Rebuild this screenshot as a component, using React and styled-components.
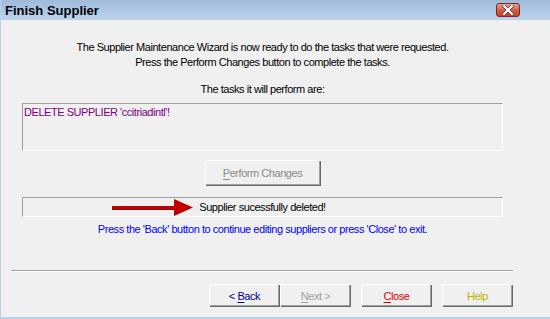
import React from "react";
import styled, { createGlobalStyle } from "styled-components";

const Global = createGlobalStyle`
  html, body {
    margin: 0;
    padding: 0;
    background: #f0f0f0;
  }
  body {
    font-family: "Liberation Sans", Arial, sans-serif;
    font-size: 11px;
    letter-spacing: -0.45px;
  }
`;

const Window = styled.div`
  width: 550px;
  height: 319px;
  box-sizing: border-box;
  background: #f0f0f0;
  border-left: 1px solid #b9d1ea;
  border-bottom: 2px solid #b9d1ea;
  display: flex;
  flex-direction: column;
  overflow: hidden;
`;

const TitleBar = styled.div`
  height: 20px;
  flex: none;
  display: flex;
  align-items: center;
  justify-content: space-between;
  padding: 0 30px 0 4px;
  background: linear-gradient(#9fbbdb, #bcd3ec);
`;

const Title = styled.div`
  font-size: 13px;
  font-weight: bold;
  letter-spacing: 0;
  color: #000;
  padding-top: 1px;
`;

const CloseBox = styled.div`
  width: 22px;
  height: 12px;
  margin-top: 0;
  border: 1px solid #7d2b22;
  border-radius: 3px;
  background: linear-gradient(#e9a596, #d35f4a 50%, #c2412c);
  display: flex;
  align-items: center;
  justify-content: center;
`;

const Body = styled.div`
  width: 481px;
  margin-left: 21px;
  display: flex;
  flex-direction: column;
  align-items: stretch;
  text-align: center;
  color: #000;
`;

const Intro = styled.p`
  margin: 20px 0 0;
  line-height: 15px;
`;

const Label = styled.p`
  margin: 12px 0 6px;
  line-height: 15px;
`;

const Sunken = styled.div`
  position: relative;
  box-sizing: border-box;
  height: ${(p) => p.$h}px;
  border-top: 1px solid #a0a0a0;
  border-left: 1px solid #a0a0a0;
  border-right: 1px solid #ffffff;
  border-bottom: 1px solid #ffffff;
  background: #f0f0f0;
`;

const TaskText = styled.div`
  text-align: left;
  color: #800080;
  line-height: 14px;
  padding: 1px 0 0 1px;
`;

const StatusText = styled.div`
  line-height: 18px;
`;

const Button = styled.button`
  box-sizing: border-box;
  width: ${(p) => p.$w}px;
  height: ${(p) => p.$h}px;
  background: #f0f0f0;
  border: none;
  padding: 0;
  font: inherit;
  letter-spacing: -0.45px;
  color: ${(p) => p.$color};
  box-shadow: inset 1px 1px #ffffff, inset -1px -1px #696969, inset -2px -2px #a0a0a0;
  cursor: pointer;

  u {
    text-decoration-thickness: 1px;
    text-underline-offset: 2px;
  }
`;

const CenterRow = styled.div`
  display: flex;
  justify-content: center;
  margin: 9px 0 11px;
`;

const Hint = styled.p`
  margin: 5px 0 0;
  line-height: 15px;
  color: #0000ff;
`;

const Arrow = styled.svg`
  position: absolute;
  left: 89px;
  top: 1px;
`;

const Footer = styled.div`
  margin: auto 0 10px 10px;
  width: 502px;
`;

const Separator = styled.div`
  border-top: 1px solid #a0a0a0;
  border-bottom: 1px solid #ffffff;
  margin-bottom: 12px;
`;

const ButtonRow = styled.div`
  display: flex;
  justify-content: flex-end;
  gap: 10px;
`;

const Pair = styled.div`
  display: flex;
`;

const XIcon = () => (
  <svg width="12" height="10" viewBox="0 0 12 10">
    <path d="M2 1 L10 9 M10 1 L2 9" stroke="#6b3a33" strokeWidth="3.6" strokeLinecap="square" />
    <path d="M2 1 L10 9 M10 1 L2 9" stroke="#ffffff" strokeWidth="2" strokeLinecap="square" />
  </svg>
);

export default function App() {
  return (
    <>
      <Global />
      <Window>
        <TitleBar>
          <Title>Finish Supplier</Title>
          <CloseBox>
            <XIcon />
          </CloseBox>
        </TitleBar>

        <Body>
          <Intro>
            The Supplier Maintenance Wizard is now ready to do the tasks that were requested.
            <br />
            Press the Perform Changes button to complete the tasks.
          </Intro>
          <Label>The tasks it will perform are:</Label>
          <Sunken $h={48}>
            <TaskText>DELETE SUPPLIER 'ccitriadintl'!</TaskText>
          </Sunken>
          <CenterRow>
            <Button $w={116} $h={26} $color="#8a8a8a">
              <u>P</u>erform Changes
            </Button>
          </CenterRow>
          <Sunken $h={20}>
            <Arrow width="82" height="18" viewBox="0 0 82 18">
              <rect x="0" y="7" width="64" height="3" fill="#c00000" />
              <rect x="0" y="10" width="64" height="1" fill="#8a1010" />
              <polygon points="62,0 81,8.5 62,17" fill="#c00000" />
            </Arrow>
            <StatusText>Supplier sucessfully deleted!</StatusText>
          </Sunken>
          <Hint>Press the 'Back' button to continue editing suppliers or press 'Close' to exit.</Hint>
        </Body>

        <Footer>
          <Separator />
          <ButtonRow>
            <Pair>
              <Button $w={71} $h={23} $color="#000080">
                &lt; <u>B</u>ack
              </Button>
              <Button $w={71} $h={23} $color="#a0a0a0">
                <u>N</u>ext &gt;
              </Button>
            </Pair>
            <Button $w={71} $h={23} $color="#e00000">
              <u>C</u>lose
            </Button>
            <Button $w={71} $h={23} $color="#b5b500">
              Help
            </Button>
          </ButtonRow>
        </Footer>
      </Window>
    </>
  );
}
